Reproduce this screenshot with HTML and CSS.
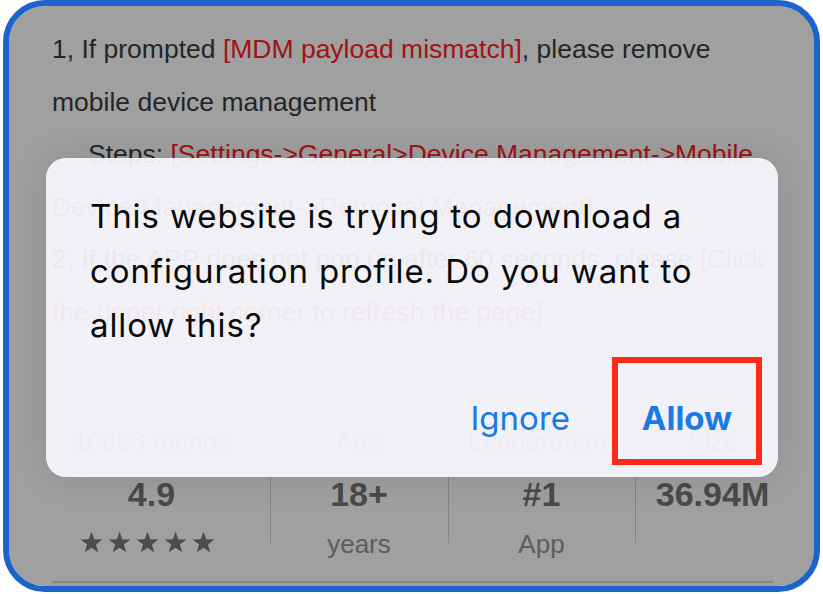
FILE: index.html
```html
<!DOCTYPE html>
<html lang="en">
<head>
<meta charset="utf-8">
<title>Configuration profile</title>
<link rel="stylesheet" href="styles.css">
</head>
<body>
<svg class="defs" width="0" height="0" aria-hidden="true">
  <symbol id="star" viewBox="0 0 22 21">
    <polygon points="11,0.5 13.59,7.94 21.46,8.1 15.18,12.86 17.47,20.4 11,15.9 4.53,20.4 6.82,12.86 0.54,8.1 8.41,7.94"/>
  </symbol>
</svg>
<div class="frame">
  <div class="page">
    <p class="para">1, If prompted <span class="red">[MDM payload mismatch]</span>, please remove<br>mobile device management</p>
    <p class="para indent">Steps: <span class="red">[Settings-&gt;General&gt;Device Management-&gt;Mobile<br>Device Management-&gt;Removal Management]</span></p>
    <p class="para">2, If the APP does not pop up after 60 seconds, please <span class="red">[Click<br>the upper right corner to refresh the page]</span></p>
    <div class="stats">
      <div class="stat first">
        <div class="label">10088 ratings</div>
        <div class="value">4.9</div>
        <div class="stars">
          <svg class="star"><use href="#star"/></svg>
          <svg class="star"><use href="#star"/></svg>
          <svg class="star"><use href="#star"/></svg>
          <svg class="star"><use href="#star"/></svg>
          <svg class="star"><use href="#star"/></svg>
        </div>
      </div>
      <div class="stat">
        <div class="label">Age</div>
        <div class="value">18+</div>
        <div class="sub">years</div>
      </div>
      <div class="stat">
        <div class="label">Leaderboard</div>
        <div class="value">#1</div>
        <div class="sub">App</div>
      </div>
      <div class="stat">
        <div class="label">Size</div>
        <div class="value">36.94M</div>
        <div class="sub"></div>
      </div>
    </div>
    <div class="rule"></div>
  </div>
  <div class="dim"></div>
  <div class="alert">
    <p class="message">This website is trying to download a configuration profile. Do you want to allow this?</p>
    <div class="actions">
      <span class="btn ignore">Ignore</span>
      <span class="btn allow">Allow</span>
    </div>
  </div>
</div>
</body>
</html>
```
FILE: styles.css
```css
html, body {
  margin: 0;
  padding: 0;
  background: #ffffff;
}
.defs {
  position: absolute;
  width: 0;
  height: 0;
}
.frame {
  position: relative;
  box-sizing: border-box;
  margin: 0 3px;
  width: 817px;
  height: 592px;
  border: 6px solid #1c63cc;
  border-radius: 42px;
  overflow: hidden;
  background: #ffffff;
}
.page {
  padding-top: 17px;
  font-family: "Liberation Sans", Arial, sans-serif;
  color: #3c3c3c;
}
.para {
  margin: 0;
  padding-left: 43px;
  font-size: 26.5px;
  line-height: 52.5px;
  white-space: nowrap;
}
.indent {
  text-indent: 36px;
}
.red {
  color: #ff2020;
}
.stats {
  display: grid;
  grid-template-columns: 237px 178px 187px 155px;
  margin-left: 24px;
  margin-top: 85px;
  text-align: center;
}
.stat {
  position: relative;
}
.stat + .stat::before {
  content: "";
  position: absolute;
  left: 0;
  top: -5px;
  bottom: 19px;
  width: 1px;
  background: #d2d2d2;
}
.label {
  font-size: 26px;
  line-height: 36px;
  color: #a8a8a8;
}
.value {
  margin-top: 13px;
  font-size: 34px;
  line-height: 44px;
  font-weight: bold;
  color: #767676;
}
.sub {
  margin-top: 10px;
  height: 36px;
  font-size: 26px;
  line-height: 36px;
  color: #949494;
}
.stars {
  margin-top: 10px;
  height: 36px;
  display: flex;
  justify-content: center;
  gap: 5px;
  padding-top: 5px;
  box-sizing: border-box;
  padding-right: 8px;
}
.star {
  width: 23px;
  height: 22px;
  fill: #7a7a7a;
}
.rule {
  margin-top: 19px;
  margin-left: 43px;
  width: 721px;
  height: 2px;
  background: #d6d6d6;
}
.dim {
  position: absolute;
  inset: 0;
  background: rgba(0, 0, 0, 0.373);
}
.alert {
  position: absolute;
  left: 37px;
  top: 152px;
  width: 732px;
  height: 319px;
  box-sizing: border-box;
  border-radius: 20px;
  background: rgba(248, 248, 254, 0.93);
  box-shadow: 0 0 40px rgba(0, 0, 0, 0.12);
  padding: 31px 16px 10px 44px;
  display: flex;
  flex-direction: column;
  font-family: Inter, "Open Sans", sans-serif;
}
.message {
  margin: 0;
  padding-right: 40px;
  font-size: 33px;
  line-height: 54.5px;
  letter-spacing: 0.9px;
  color: #0a0a0a;
}
.actions {
  margin-top: 4px;
  display: flex;
  justify-content: flex-end;
  align-items: stretch;
  gap: 42px;
}
.btn {
  font-size: 33px;
  color: #1a7ae6;
}
.ignore {
  display: flex;
  align-items: center;
  padding-top: 14px;
}
.allow {
  box-sizing: border-box;
  width: 150px;
  height: 108px;
  border: 6px solid #ff2a1a;
  display: flex;
  align-items: center;
  justify-content: center;
  padding-top: 14px;
  font-weight: 700;
}
```
